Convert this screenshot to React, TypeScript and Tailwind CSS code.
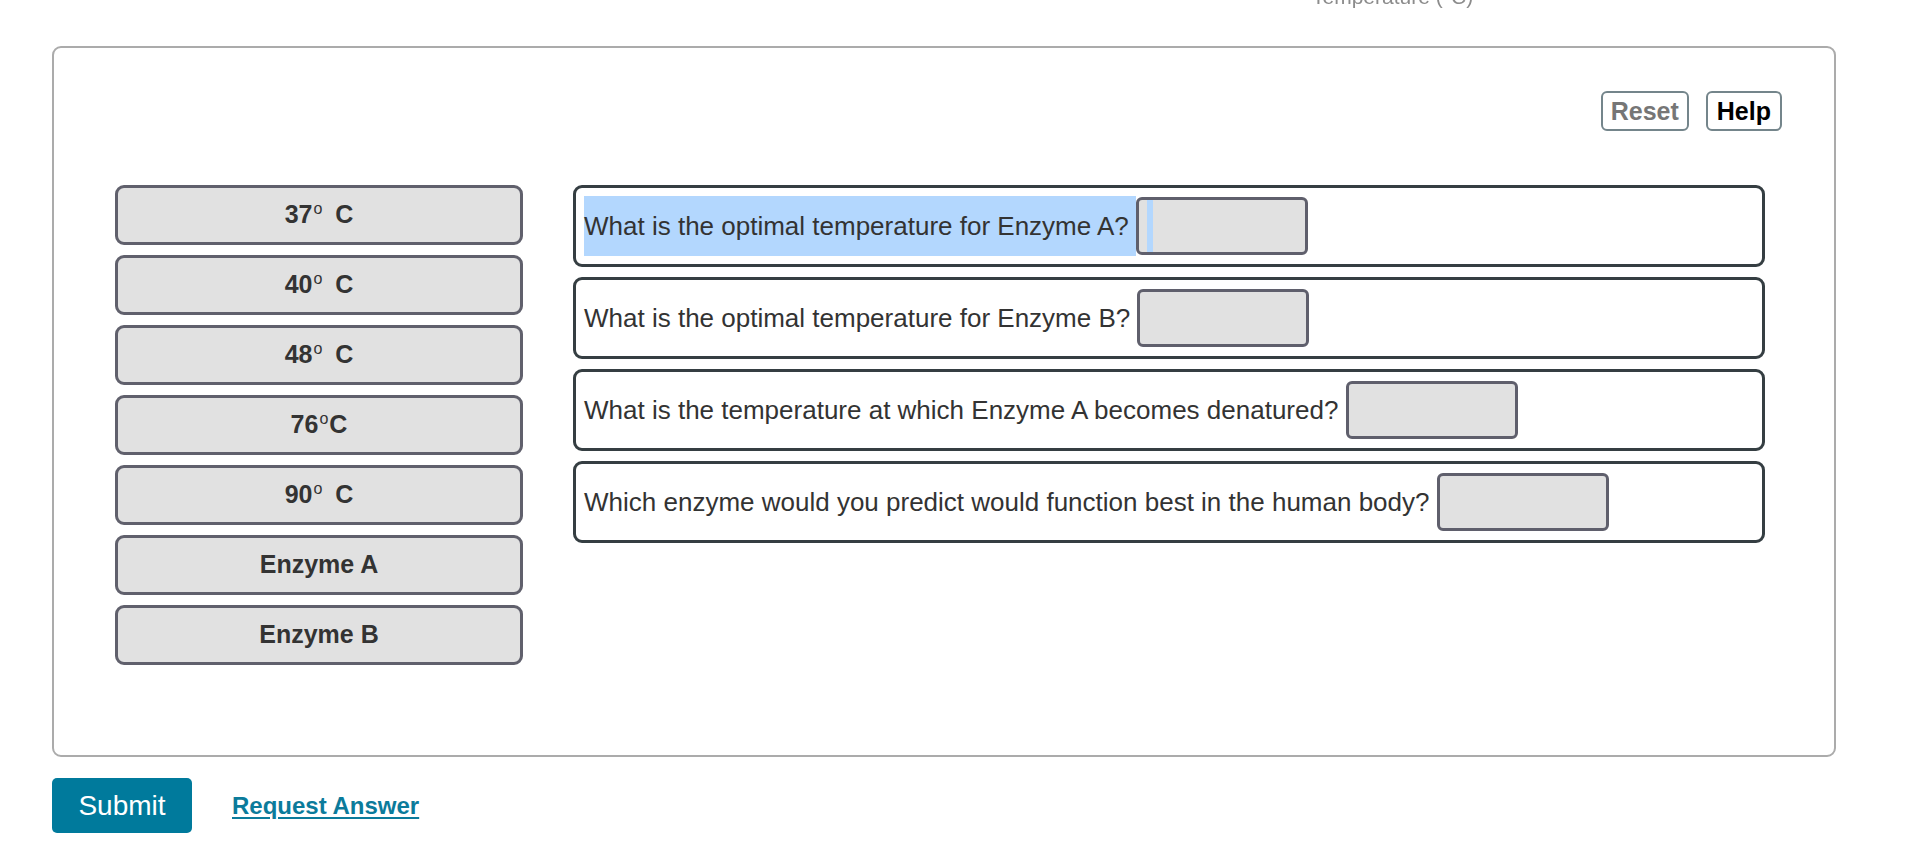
import React from "react";

const labels = [
  { num: "37", deg: true, unit: " C" },
  { num: "40", deg: true, unit: " C" },
  { num: "48", deg: true, unit: " C" },
  { num: "76", deg: true, unit: "C" },
  { num: "90", deg: true, unit: " C" },
  { num: "Enzyme A" },
  { num: "Enzyme B" },
];

const questions = [
  "What is the optimal temperature for Enzyme A?",
  "What is the optimal temperature for Enzyme B?",
  "What is the temperature at which Enzyme A becomes denatured?",
  "Which enzyme would you predict would function best in the human body?",
];

const DropTarget: React.FC<{ selected?: boolean }> = ({ selected }) => (
  <div className="w-[172px] h-[58px] rounded-[6px] border-[3px] border-[#5f5f6c] bg-[#e1e1e1] flex">
    {selected && <div className="ml-[8px] w-[6px] h-full bg-[#b3d7fe]" />}
  </div>
);

export default function App() {
  return (
    <div className="min-h-screen bg-white font-['Liberation_Sans',Arial,sans-serif]">
      {/* cut-off axis label from the chart above */}
      <div className="h-[46px] overflow-hidden">
        <div className="ml-[1312px] -mt-[15px] text-[21px] leading-[24px] text-[#8c8c8c] blur-[0.6px]">
          Temperature (°C)
        </div>
      </div>

      <div className="ml-[52px] w-[1784px] h-[711px] border-2 border-[#ababab] rounded-[9px]">
        <div className="flex justify-end gap-[17px] pt-[43px] pr-[52px]">
          <button className="h-[40px] px-[8px] border-2 border-[#74858b] rounded-[6px] text-[25px] font-bold text-[#767676] leading-none">
            Reset
          </button>
          <button className="h-[40px] px-[9px] border-2 border-[#74858b] rounded-[6px] text-[25px] font-bold text-black leading-none">
            Help
          </button>
        </div>

        <div className="flex mt-[54px] pl-[61px] gap-[50px]">
          <div className="w-[408px] flex flex-col gap-[10px]">
            {labels.map((l) => (
              <div
                key={l.num}
                className="h-[60px] rounded-[9px] border-[3px] border-[#60606c] bg-[#e1e1e1] flex items-center justify-center text-[25px] font-bold text-[#333]"
              >
                <span>{l.num}</span>
                {l.deg && (
                  <span
                    className={
                      l.unit === " C"
                        ? "font-normal text-[16px] leading-none ml-[1px] mr-[6px] -translate-y-[6px]"
                        : "font-normal text-[16px] leading-none ml-[1px] mr-[1px] -translate-y-[6px]"
                    }
                  >
                    o
                  </span>
                )}
                {l.unit && <span className="whitespace-pre">{l.unit}</span>}
              </div>
            ))}
          </div>

          <div className="w-[1192px] flex flex-col gap-[10px]">
            {questions.map((q, i) => (
              <div
                key={q}
                className="h-[82px] rounded-[9px] border-[3px] border-[#353e42] pl-[8px] flex items-center text-[26px] text-[#333]"
              >
                <span
                  className={
                    i === 0
                      ? "h-[60px] flex items-center whitespace-pre bg-[#b3d7fe]"
                      : "whitespace-pre"
                  }
                >
                  {q + " "}
                </span>
                <DropTarget selected={i === 0} />
              </div>
            ))}
          </div>
        </div>
      </div>

      <div className="flex items-center mt-[21px] ml-[52px] gap-[40px]">
        <button className="w-[140px] h-[55px] rounded-[5px] bg-[#007a9c] text-white text-[28px]">
          Submit
        </button>
        <a className="text-[24px] font-bold text-[#0b7b9b] underline underline-offset-[3px] cursor-pointer">
          Request Answer
        </a>
      </div>
    </div>
  );
}
